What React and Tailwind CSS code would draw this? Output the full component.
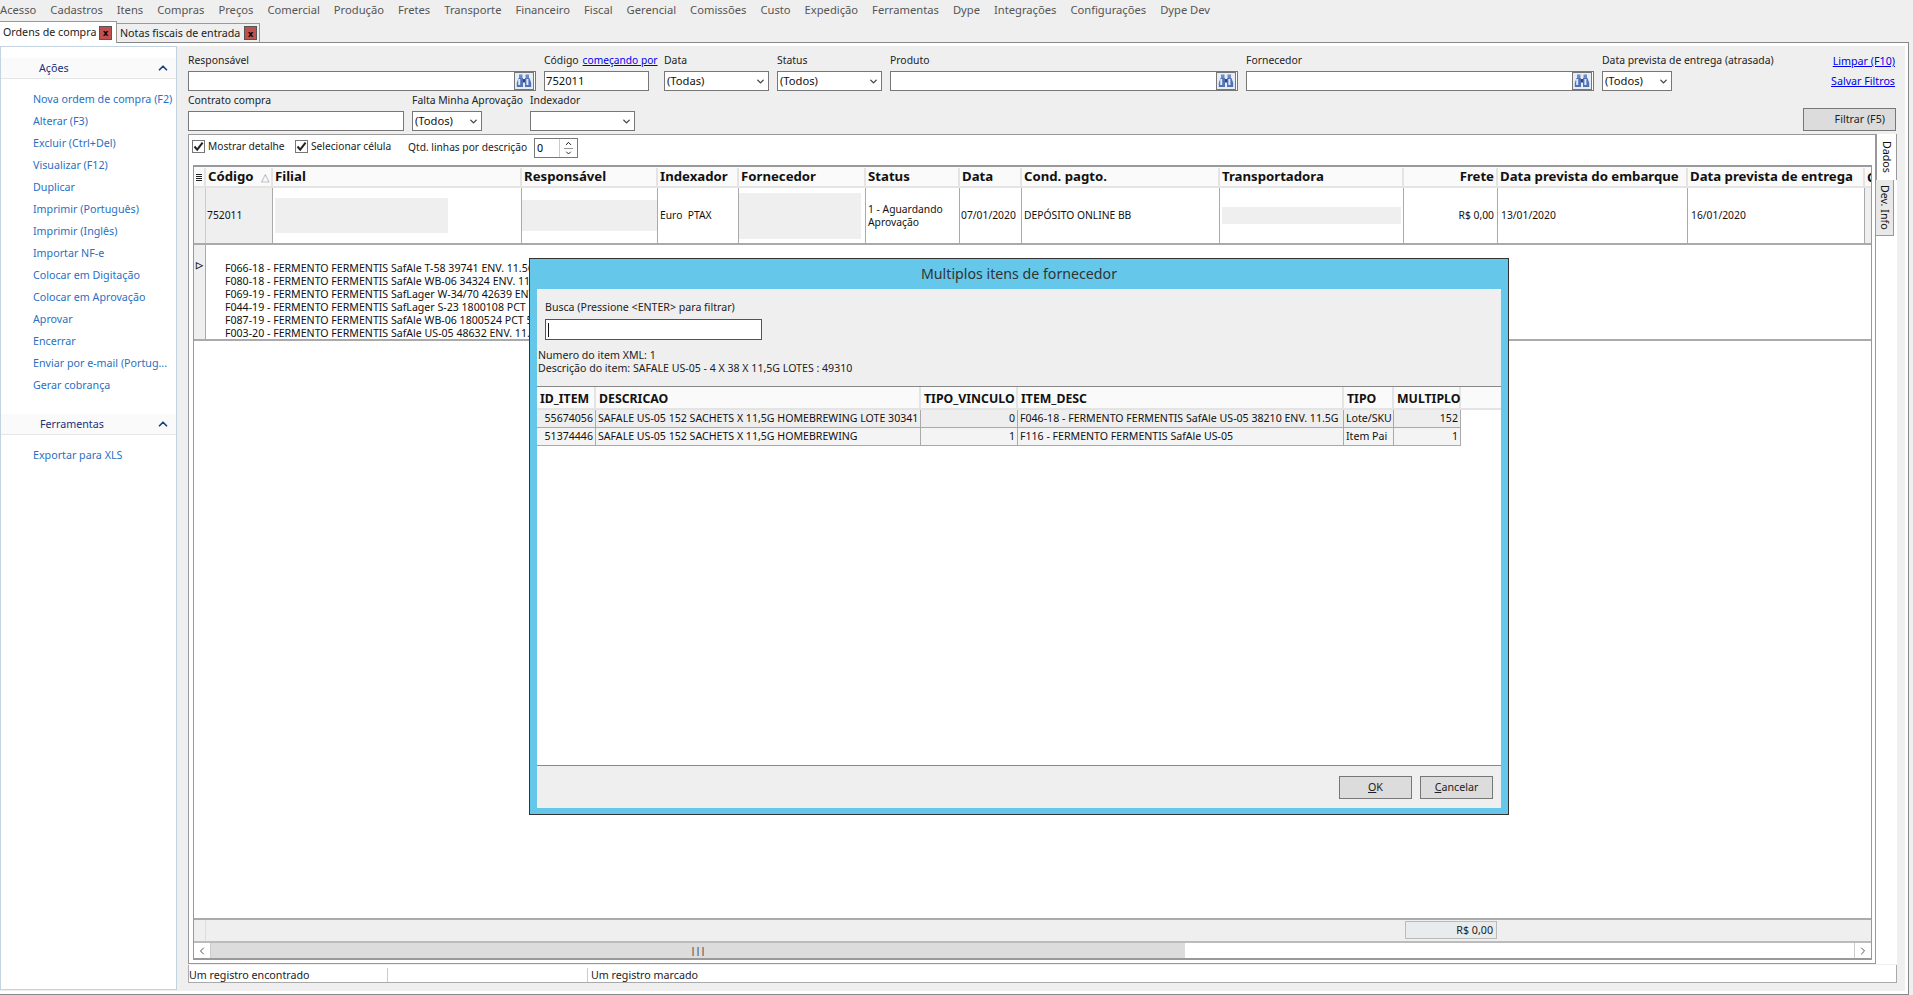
import { ChevronDown, ChevronUp, ChevronLeft, ChevronRight } from "lucide-react";

const font = "font-['Noto_Sans','Open_Sans',sans-serif]";

const menus = [
  "Acesso", "Cadastros", "Itens", "Compras", "Preços", "Comercial", "Produção", "Fretes",
  "Transporte", "Financeiro", "Fiscal", "Gerencial", "Comissões", "Custo", "Expedição",
  "Ferramentas", "Dype", "Integrações", "Configurações", "Dype Dev",
];

const actions = [
  "Nova ordem de compra (F2)", "Alterar (F3)", "Excluir (Ctrl+Del)", "Visualizar (F12)", "Duplicar",
  "Imprimir (Português)", "Imprimir (Inglês)", "Importar NF-e", "Colocar em Digitação",
  "Colocar em Aprovação", "Aprovar", "Encerrar", "Enviar por e-mail (Portug...", "Gerar cobrança",
];

const detailLines = [
  "F066-18 - FERMENTO FERMENTIS SafAle T-58 39741 ENV. 11.5G",
  "F080-18 - FERMENTO FERMENTIS SafAle WB-06 34324 ENV. 11.5G",
  "F069-19 - FERMENTO FERMENTIS SafLager W-34/70 42639 ENV. 11.5G",
  "F044-19 - FERMENTO FERMENTIS SafLager S-23 1800108 PCT",
  "F087-19 - FERMENTO FERMENTIS SafAle WB-06 1800524 PCT 500G",
  "F003-20 - FERMENTO FERMENTIS SafAle US-05 48632 ENV. 11.5G",
];

const gridCols = [
  { title: "Código", w: "w-[67px]" },
  { title: "Filial", w: "w-[249px]" },
  { title: "Responsável", w: "w-[136px]" },
  { title: "Indexador", w: "w-[81px]" },
  { title: "Fornecedor", w: "w-[127px]" },
  { title: "Status", w: "w-[94px]" },
  { title: "Data", w: "w-[62px]" },
  { title: "Cond. pagto.", w: "w-[198px]" },
  { title: "Transportadora", w: "w-[184px]" },
  { title: "Frete", w: "w-[94px]", right: true },
  { title: "Data prevista do embarque", w: "w-[190px]" },
  { title: "Data prevista de entrega", w: "w-[177px]" },
];

const modalCols = ["w-[59px]", "w-[325px]", "w-[97px]", "w-[326px]", "w-[50px]", "w-[67px]"];
const modalHead = ["ID_ITEM", "DESCRICAO", "TIPO_VINCULO", "ITEM_DESC", "TIPO", "MULTIPLO"];
const modalRows = [
  ["55674056", "SAFALE US-05 152 SACHETS X 11,5G HOMEBREWING LOTE 30341", "0", "F046-18 - FERMENTO FERMENTIS SafAle US-05 38210 ENV. 11.5G", "Lote/SKU", "152"],
  ["51374446", "SAFALE US-05 152 SACHETS X 11,5G HOMEBREWING", "1", "F116 - FERMENTO FERMENTIS SafAle US-05", "Item Pai", "1"],
];
const modalRight = [true, false, true, false, false, true];

function Binoculars() {
  return (
    <div className="flex h-[18px] w-[20px] shrink-0 items-center justify-center border border-[#777] bg-[#e8edf4]">
      <svg width="16" height="14" viewBox="0 0 16 14">
        <rect x="3" y="0.5" width="3.5" height="4" fill="#6d8ac4" />
        <rect x="9.5" y="0.5" width="3.5" height="4" fill="#6d8ac4" />
        <path d="M2.5 4h4.5v9H0.8v-4z" fill="#4f72b8" />
        <path d="M13.5 4H9v9h6.2V9z" fill="#4f72b8" />
        <rect x="7" y="5" width="2" height="3.5" fill="#2d4680" />
        <rect x="2.2" y="5" width="2" height="6" fill="#dfe8f8" />
        <rect x="10.4" y="5" width="2" height="6" fill="#dfe8f8" />
      </svg>
    </div>
  );
}

function TextBox({ w, value, search }) {
  return (
    <div className={`flex h-[20px] ${w} shrink-0 items-center justify-between border border-[#777] bg-white pl-[1px] pr-[1px] text-[11.2px] text-[#111]`}>
      <span>{value}</span>
      {search && <Binoculars />}
    </div>
  );
}

function SelectBox({ w, value }) {
  return (
    <div className={`flex h-[20px] ${w} shrink-0 items-center justify-between border border-[#777] bg-white pl-[2px] pr-[2px] text-[11.2px] text-[#111]`}>
      <span>{value}</span>
      <ChevronDown size={11} strokeWidth={3} className="text-[#444]" />
    </div>
  );
}

function Field({ label, children, mr, link }) {
  return (
    <div className={`flex shrink-0 flex-col ${mr}`}>
      <div className="flex h-[20px] w-0 items-center gap-[4px] whitespace-nowrap text-[10.4px] text-[#222]">
        {label}
        {link && <span className="text-[10.2px] text-[#0000ee] underline">{link}</span>}
      </div>
      {children}
    </div>
  );
}

function Check({ label, w }) {
  return (
    <div className={`mt-[1px] flex items-center gap-[3px] ${w} text-[10.2px] text-[#222]`}>
      <div className="flex h-[13px] w-[13px] items-center justify-center border border-[#777] bg-white">
        <svg width="11" height="11" viewBox="0 0 11 11">
          <path d="M1.5 5.5L4.2 8.6L9.6 1.6" fill="none" stroke="#222" strokeWidth="2" />
        </svg>
      </div>
      {label}
    </div>
  );
}

function SideHeader({ title, pl }) {
  return (
    <div className={`flex h-[21px] items-center justify-between border-b border-[#e6e6e6] bg-[#fafafa] ${pl} pr-[6px] text-[10.7px] text-[#20307a]`}>
      <span>{title}</span>
      <ChevronUp size={14} strokeWidth={3} className="text-[#1c3f7c]" />
    </div>
  );
}

function SideLink({ children }) {
  return <div className="flex h-[22px] items-center whitespace-nowrap pl-[32px] text-[10.7px] text-[#2a6fc4]">{children}</div>;
}

function Sidebar() {
  return (
    <aside className="flex w-[177px] shrink-0 flex-col border border-[#c3d3e0] bg-white pt-[11px]">
      <SideHeader title="Ações" pl="pl-[38px]" />
      <div className="flex flex-col pt-[9px]">
        {actions.map((a) => (
          <SideLink key={a}>{a}</SideLink>
        ))}
      </div>
      <div className="mt-[18px]">
        <SideHeader title="Ferramentas" pl="pl-[39px]" />
      </div>
      <div className="pt-[9px]">
        <SideLink>Exportar para XLS</SideLink>
      </div>
    </aside>
  );
}

function Filters() {
  return (
    <div className="relative h-[88px] shrink-0">
      <div className="flex pt-[5px]">
        <Field label="Responsável" mr="mr-[8px]"><TextBox w="w-[348px]" search /></Field>
        <Field label="Código" link="começando por" mr="mr-[15px]"><TextBox w="w-[105px]" value="752011" /></Field>
        <Field label="Data" mr="mr-[8px]"><SelectBox w="w-[105px]" value="(Todas)" /></Field>
        <Field label="Status" mr="mr-[8px]"><SelectBox w="w-[105px]" value="(Todos)" /></Field>
        <Field label="Produto" mr="mr-[8px]"><TextBox w="w-[348px]" search /></Field>
        <Field label="Fornecedor" mr="mr-[8px]"><TextBox w="w-[348px]" search /></Field>
        <Field label="Data prevista de entrega (atrasada)"><SelectBox w="w-[70px]" value="(Todos)" /></Field>
        <div className="ml-auto mr-[10px] flex flex-col items-end text-[10.7px] text-[#0000ee] underline">
          <div className="flex h-[20px] items-center">Limpar (F10)</div>
          <div className="flex h-[20px] items-center">Salvar Filtros</div>
        </div>
      </div>
      <div className="flex">
        <Field label="Contrato compra" mr="mr-[8px]"><TextBox w="w-[216px]" /></Field>
        <Field label="Falta Minha Aprovação" mr="mr-[48px]"><SelectBox w="w-[70px]" value="(Todos)" /></Field>
        <Field label="Indexador"><SelectBox w="w-[105px]" /></Field>
        <div className="ml-auto mr-[9px] mt-[17px] flex h-[23px] w-[93px] items-center justify-end border border-[#777] bg-[#dcdcdc] pr-[10px] text-[10.7px] text-[#222]">
          Filtrar (F5)
        </div>
      </div>
    </div>
  );
}

function GridToolbar() {
  return (
    <div className="flex h-[30px] shrink-0 items-start pl-[3px] pt-[3px]">
      <Check label="Mostrar detalhe" w="w-[103px]" />
      <Check label="Selecionar célula" w="w-[113px]" />
      <span className="mt-[2px] w-[126px] text-[10.2px] text-[#222]">Qtd. linhas por descrição</span>
      <div className="flex h-[20px] w-[44px] items-center justify-between border border-[#777] bg-white pl-[2px] text-[10.7px]">
        0
        <div className="flex h-full w-[18px] flex-col items-center justify-center border-l border-[#ccc]">
          <ChevronUp size={9} strokeWidth={2.5} />
          <ChevronDown size={9} strokeWidth={2.5} className="border-t border-[#999]" />
        </div>
      </div>
    </div>
  );
}

function GridRow() {
  return (
    <div className="flex h-[57px] shrink-0 border-b-2 border-[#aaa] text-[10.3px] text-[#111]">
      <div className="w-[12px] shrink-0 border-r border-[#ccc] bg-[#efefef]" />
      <div className="flex w-[67px] shrink-0 items-center border-r border-[#aaa] bg-[#efefef] pl-[1px]">752011</div>
      <div className="flex w-[249px] shrink-0 items-center border-r border-[#aaa] pl-[2px]">
        <div className="h-[35px] w-[173px] bg-[#efefef]" />
      </div>
      <div className="flex w-[136px] shrink-0 items-center border-r border-[#aaa]">
        <div className="h-[31px] w-[135px] bg-[#efefef]" />
      </div>
      <div className="flex w-[81px] shrink-0 items-center border-r border-[#aaa] pl-[2px]">Euro&nbsp; PTAX</div>
      <div className="flex w-[127px] shrink-0 items-center border-r border-[#aaa]">
        <div className="h-[46px] w-[122px] bg-[#efefef]" />
      </div>
      <div className="flex w-[94px] shrink-0 items-center border-r border-[#aaa] pl-[2px] leading-[13px]">1 - Aguardando Aprovação</div>
      <div className="flex w-[62px] shrink-0 items-center border-r border-[#aaa] pl-[1px]">07/01/2020</div>
      <div className="flex w-[198px] shrink-0 items-center border-r border-[#aaa] pl-[2px]">DEPÓSITO ONLINE BB</div>
      <div className="flex w-[184px] shrink-0 items-center border-r border-[#aaa] pl-[2px]">
        <div className="h-[17px] w-[179px] bg-[#efefef]" />
      </div>
      <div className="flex w-[94px] shrink-0 items-center justify-end border-r border-[#aaa] pr-[3px]">R$ 0,00</div>
      <div className="flex w-[190px] shrink-0 items-center border-r border-[#aaa] pl-[3px]">13/01/2020</div>
      <div className="flex w-[177px] shrink-0 items-center border-r border-[#aaa] pl-[3px]">16/01/2020</div>
      <div className="flex-1 bg-[#efefef]" />
    </div>
  );
}

function Grid() {
  return (
    <div className="mb-[3px] ml-[4px] mr-[3px] flex min-h-0 flex-1 flex-col overflow-hidden border-x border-b-2 border-t-2 border-[#999]">
      <div className="flex h-[21px] shrink-0 border-b-2 border-[#e4e4e4] bg-[#fafafa] pt-[1px] text-[13.2px] font-bold text-[#111]">
        <div className="flex w-[12px] shrink-0 flex-col items-center justify-center gap-px border-r-2 border-[#e4e4e4]">
          <div className="h-[1px] w-[6px] bg-[#222]" />
          <div className="h-[1px] w-[6px] bg-[#222]" />
          <div className="h-[1px] w-[6px] bg-[#222]" />
          <div className="h-[1px] w-[6px] bg-[#222]" />
        </div>
        {gridCols.map((c) => (
          <div key={c.title} className={`flex ${c.w} shrink-0 items-center whitespace-nowrap border-r-2 border-[#e4e4e4] px-[2px] ${c.right ? "justify-end" : ""}`}>
            {c.title}
            {c.title === "Código" && <span className="ml-[7px] text-[11px] font-normal text-[#999]">△</span>}
          </div>
        ))}
        <div className="flex-1 overflow-hidden pl-[2px]">C</div>
      </div>
      <GridRow />
      <div className="flex h-[96px] shrink-0 border-b-2 border-[#aaa]">
        <div className="flex w-[12px] shrink-0 justify-center border-r border-[#aaa] bg-[#efefef] pt-[15px] text-[9px] font-bold leading-[10px] text-[#111]">▷</div>
        <div className="overflow-hidden whitespace-nowrap pl-[19px] pt-[17px] text-[10.6px] leading-[13px] text-[#111]">
          {detailLines.map((l) => (
            <div key={l}>{l}</div>
          ))}
        </div>
      </div>
      <div className="flex-1 bg-white" />
      <div className="flex h-[23px] shrink-0 border-t-2 border-[#aaa] bg-[#efefef]">
        <div className="w-[12px] border-r border-[#ddd]" />
        <div className="w-[1199px]" />
        <div className="mt-[1px] flex h-[18px] w-[92px] items-center justify-end border border-[#bbb] bg-[#e8ecec] pr-[3px] pt-[1px] text-[10.7px] text-[#222]">R$ 0,00</div>
      </div>
      <div className="flex h-[17px] shrink-0 border-t-2 border-[#bbb] bg-white">
        <div className="flex w-[17px] items-center justify-center border-r border-[#ccc]"><ChevronLeft size={12} className="text-[#555]" /></div>
        <div className="flex w-[974px] items-center justify-center bg-[#dcdcdc] text-[9px] font-bold leading-none text-[#555]">|||</div>
        <div className="flex-1" />
        <div className="flex w-[17px] items-center justify-center border-l border-[#ccc]"><ChevronRight size={12} className="text-[#555]" /></div>
      </div>
    </div>
  );
}

function SideTabs() {
  return (
    <div className="flex w-[21px] shrink-0 flex-col bg-white">
      <div className="flex h-[46px] items-center justify-center border-y border-r border-[#999] bg-white text-[10.7px] text-[#111] [writing-mode:vertical-rl]">Dados</div>
      <div className="flex h-[56px] w-[18px] items-center justify-center border-b border-r border-[#999] bg-[#e8e8e8] text-[10.7px] text-[#111] [writing-mode:vertical-rl]">Dev. Info</div>
    </div>
  );
}

function Modal() {
  return (
    <div className="absolute left-[529px] top-[258px] flex h-[557px] w-[980px] flex-col border border-[#333] bg-[#65c8ea] px-[7px] pb-[6px]">
      <div className="flex h-[30px] shrink-0 items-center justify-center text-[14.2px] text-[#333]">Multiplos itens de fornecedor</div>
      <div className="flex min-h-0 flex-1 flex-col bg-[#efefef]">
        <div className="h-[97px] shrink-0 text-[10.6px] text-[#222]">
          <div className="pl-[8px] pt-[11px] leading-[14px]">Busca (Pressione &lt;ENTER&gt; para filtrar)</div>
          <div className="ml-[8px] mt-[5px] flex h-[21px] w-[217px] items-center border border-[#355a85] bg-white pl-[2px]">
            <div className="h-[14px] w-px bg-[#111]" />
          </div>
          <div className="pl-[1px] pt-[9px] leading-[13px]">
            <div>Numero do item XML: 1</div>
            <div>Descrição do item: SAFALE US-05 - 4 X 38 X 11,5G LOTES : 49310</div>
          </div>
        </div>
        <div className="min-h-0 flex-1 border-y border-[#888] bg-white">
          <div className="flex h-[23px] border-b-2 border-[#e4e4e4] bg-[#fafafa] text-[12.3px] font-bold text-[#111]">
            {modalHead.map((h, i) => (
              <div key={h} className={`flex ${modalCols[i]} shrink-0 items-center whitespace-nowrap border-r-2 border-[#e4e4e4] pl-[3px] pt-[4px]`}>{h}</div>
            ))}
          </div>
          {modalRows.map((r, ri) => (
            <div key={r[0]} className={`flex h-[18px] w-[924px] border-b border-[#aaa] text-[10.6px] text-[#111] ${ri === 0 ? "bg-[#eeeeee]" : "bg-[#f4f4f4]"}`}>
              {r.map((v, i) => (
                <div key={i} className={`flex ${modalCols[i]} shrink-0 items-center whitespace-nowrap border-r border-[#aaa] px-[2px] ${modalRight[i] ? "justify-end" : ""}`}>{v}</div>
              ))}
            </div>
          ))}
        </div>
        <div className="flex h-[42px] shrink-0 items-start justify-end gap-[8px] pr-[8px] pt-[10px] text-[10.7px] text-[#222]">
          <div className="flex h-[23px] w-[73px] items-center justify-center border border-[#777] bg-[#dcdcdc]"><span><u>O</u>K</span></div>
          <div className="flex h-[23px] w-[73px] items-center justify-center border border-[#777] bg-[#dcdcdc]"><span><u>C</u>ancelar</span></div>
        </div>
      </div>
    </div>
  );
}

export default function App() {
  return (
    <div className={`relative flex h-[995px] w-[1913px] flex-col overflow-hidden bg-[#efefef] ${font}`}>
      <div className="flex h-[20px] shrink-0 items-center gap-[14px] text-[11.2px] text-[#555]">
        {menus.map((m) => (
          <span key={m}>{m}</span>
        ))}
      </div>
      <div className="flex h-[22px] shrink-0 items-end whitespace-nowrap text-[10.7px] text-[#222]">
        <div className="relative z-10 -mb-px flex h-[22px] w-[117px] items-center justify-between border-r border-t border-[#999] bg-white pl-[3px] pr-[4px]">
          Ordens de compra
          <span className="flex h-[14px] w-[13px] items-center justify-center border border-[#555] bg-[#c0504d] text-[9px] font-bold leading-none text-black">x</span>
        </div>
        <div className="flex h-[19px] w-[143px] items-center justify-between border-r border-t border-[#999] bg-[#efefef] pl-[3px] pr-[2px]">
          Notas fiscais de entrada
          <span className="flex h-[14px] w-[13px] items-center justify-center border border-[#555] bg-[#c0504d] text-[9px] font-bold leading-none text-black">x</span>
        </div>
      </div>
      <div className="mr-[4px] flex min-h-0 flex-1 border border-l-0 border-[#888] bg-white pb-[3px] pr-[3px] pt-[3px]">
        <div className="flex min-w-0 flex-1 bg-[#efefef] pb-[1px]">
          <Sidebar />
          <div className="flex min-w-0 flex-1 flex-col pl-[11px]">
            <Filters />
            <div className="flex h-[830px] min-h-0 shrink-0">
              <div className="flex min-w-0 flex-1 flex-col border border-[#999] bg-white">
                <GridToolbar />
                <Grid />
              </div>
              <SideTabs />
              <div className="w-[8px] shrink-0" />
            </div>
            <div className="mt-[1px] flex h-[18px] w-[1709px] shrink-0 border border-t-0 border-[#aaa] bg-white pt-[3px] text-[10.7px] text-[#222]">
              <div className="flex w-[199px] items-center border-r border-[#ccc]">Um registro encontrado</div>
              <div className="w-[200px] border-r border-[#ccc]" />
              <div className="flex items-center pl-[3px]">Um registro marcado</div>
            </div>
          </div>
        </div>
      </div>
      <Modal />
    </div>
  );
}
